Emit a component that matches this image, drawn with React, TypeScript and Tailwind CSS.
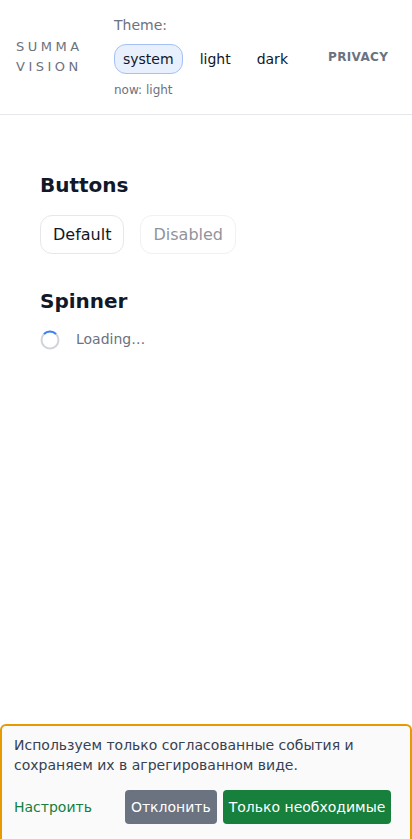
import { useState } from "react";

const font = { fontFamily: '"DejaVu Sans", "Noto Sans", sans-serif' };

function cn(...a: (string | false | null | undefined)[]) {
  return a.filter(Boolean).join(" ");
}

export default function App() {
  const [theme, setTheme] = useState("system");
  const themes = ["system", "light", "dark"];

  return (
    <div className="min-h-[839px] bg-white text-[#111827]" style={font}>
      {/* header */}
      <header className="flex items-center h-[115px] border-b border-[#e5e7eb] pl-4">
        <div className="text-[13px] leading-5 tracking-[0.27em] text-[#6b7280] w-[98px]">
          <div>SUMMA</div>
          <div>VISION</div>
        </div>
        <div className="flex flex-col self-start pt-[15px]">
          <div className="text-[14px] leading-5 text-[#6b7280]">Theme:</div>
          <div className="flex items-center gap-2 mt-[9px]">
            {themes.map((t) => (
              <button
                key={t}
                onClick={() => setTheme(t)}
                className={cn(
                  "h-[30px] px-2 rounded-xl border text-[14px] leading-none",
                  theme === t
                    ? "bg-[#e8f0fe] border-[#a5c0f5] text-[#111827]"
                    : "border-transparent text-[#111827]"
                )}
              >
                {t}
              </button>
            ))}
          </div>
          <div className="text-[12px] leading-4 text-[#6b7280] mt-[8px]">now: light</div>
        </div>
        <a className="ml-[31px] text-[12px] font-bold tracking-[0.03em] text-[#6b7280]">
          PRIVACY
        </a>
      </header>

      {/* content */}
      <main className="px-10 pt-[56px]">
        <h2 className="text-[20px] leading-7 font-bold text-[#111827]">Buttons</h2>
        <div className="flex gap-4 mt-[16px]">
          <button className="h-[39px] px-3 rounded-xl border border-[#e5e7eb] bg-white text-[16px] text-[#111827]">
            Default
          </button>
          <button
            disabled
            className="h-[39px] px-3 rounded-xl border border-[#f0f1f3] bg-white text-[16px] text-[#8f949c]"
          >
            Disabled
          </button>
        </div>

        <h2 className="text-[20px] leading-7 font-bold text-[#111827] mt-[33px]">Spinner</h2>
        <div className="flex items-center gap-4 mt-[14px]">
          <svg width="20" height="20" viewBox="0 0 20 20">
            <circle cx="10" cy="10" r="8.5" fill="none" stroke="#d1d5db" strokeWidth="2" />
            <path d="M4 4 A8.5 8.5 0 0 1 16 4" fill="none" stroke="#3b82f6" strokeWidth="2" />
          </svg>
          <span className="text-[14px] text-[#6b7280]">Loading…</span>
        </div>
      </main>

      {/* cookie banner */}
      <div className="fixed bottom-0 left-0 right-0 h-[115px] border-2 border-b-0 border-[#e69a00] rounded-t-md bg-[#fafafa] px-3 pt-[9px]">
        <p className="text-[14px] leading-5 text-[#374151]">
          Используем только согласованные события и сохраняем их в агрегированном виде.
        </p>
        <div className="flex items-center gap-1.5 mt-[15px]">
          <button className="text-[14px] text-[#15803d] mr-[27px]">Настроить</button>
          <button className="h-[34px] px-1.5 rounded bg-[#6b7280] text-white text-[14px]">Отклонить</button>
          <button className="h-[34px] px-1.5 rounded bg-[#16803c] text-white text-[14px] whitespace-nowrap">
            Только необходимые
          </button>
        </div>
      </div>
    </div>
  );
}
